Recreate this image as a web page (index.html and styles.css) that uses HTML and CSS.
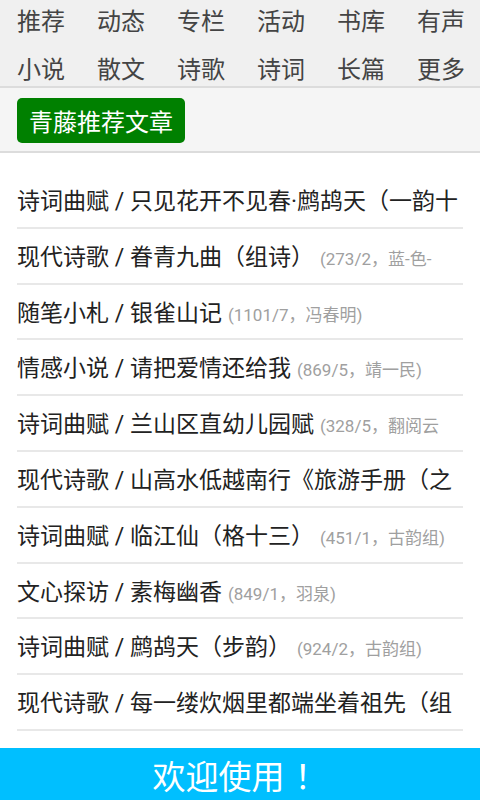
FILE: index.html
```html
<!DOCTYPE html>
<html lang="zh">
<head>
<meta charset="utf-8">
<link rel="stylesheet" href="styles.css">
</head>
<body>
<nav class="nav">
  <a>推荐</a><a>动态</a><a>专栏</a><a>活动</a><a>书库</a><a>有声</a>
  <a>小说</a><a>散文</a><a>诗歌</a><a>诗词</a><a>长篇</a><a>更多</a>
</nav>
<div class="bar"><span class="btn">青藤推荐文章</span></div>
<ul class="list">
  <li><span class="t">诗词曲赋 / 只见花开不见春·鹧鸪天（一韵十</span></li>
  <li><span class="t">现代诗歌 / 眷青九曲（组诗）</span><span class="m">(273/2，蓝-色-</span></li>
  <li><span class="t">随笔小札 / 银雀山记</span><span class="m">(1101/7，冯春明)</span></li>
  <li><span class="t">情感小说 / 请把爱情还给我</span><span class="m">(869/5，靖一民)</span></li>
  <li><span class="t">诗词曲赋 / 兰山区直幼儿园赋</span><span class="m">(328/5，翻阅云</span></li>
  <li><span class="t">现代诗歌 / 山高水低越南行《旅游手册（之</span></li>
  <li><span class="t">诗词曲赋 / 临江仙（格十三）</span><span class="m">(451/1，古韵组)</span></li>
  <li><span class="t">文心探访 / 素梅幽香</span><span class="m">(849/1，羽泉)</span></li>
  <li><span class="t">诗词曲赋 / 鹧鸪天（步韵）</span><span class="m">(924/2，古韵组)</span></li>
  <li><span class="t">现代诗歌 / 每一缕炊烟里都端坐着祖先（组</span></li>
</ul>
<footer class="foot">欢迎使用<span class="ex">！</span></footer>
</body>
</html>
```
FILE: styles.css
```css
html, body {
  margin: 0;
  padding: 0;
  width: 480px;
  height: 800px;
  overflow: hidden;
  background: #fff;
  font-family: "Noto Sans CJK SC", "Noto Sans", sans-serif;
}
.nav {
  display: grid;
  grid-template-columns: repeat(6, 80px);
  grid-template-rows: 48px 38px;
  padding-left: 17px;
  background: #f0f0f0;
  border-bottom: 2px solid #dcdcdc;
  height: 86px;
}
.nav a {
  font-size: 24px;
  line-height: 40px;
  color: #444;
}
.bar {
  background: #f5f5f5;
  height: 65px;
  padding: 10px 17px 0;
  box-sizing: border-box;
  border-bottom: 2px solid #dcdcdc;
}
.btn {
  display: inline-block;
  background: #008000;
  color: #fff;
  font-size: 24px;
  line-height: 45px;
  height: 45px;
  padding: 0 12px;
  border-radius: 5px;
}
.list {
  list-style: none;
  margin: 0;
  padding: 20px 17px 0;
}
.list li {
  height: 53.8px;
  line-height: 57px;
  border-bottom: 2px solid #e8e8e8;
  white-space: nowrap;
  overflow: hidden;
}
.t {
  font-family: Roboto, "Noto Sans CJK SC", sans-serif;
  font-size: 23px;
  color: #222;
}
.m {
  font-family: Roboto, "Noto Sans CJK SC", sans-serif;
  font-size: 17px;
  color: #a0a0a0;
  margin-left: 6px;
}
.foot {
  position: fixed;
  left: 0;
  right: 0;
  bottom: 0;
  height: 52px;
  background: #00bfff;
  color: #fff;
  text-align: center;
  font-size: 33px;
  line-height: 54px;
}
.ex {
  display: inline-block;
  width: 33px;
  padding-left: 10px;
  text-align: left;
}
```
